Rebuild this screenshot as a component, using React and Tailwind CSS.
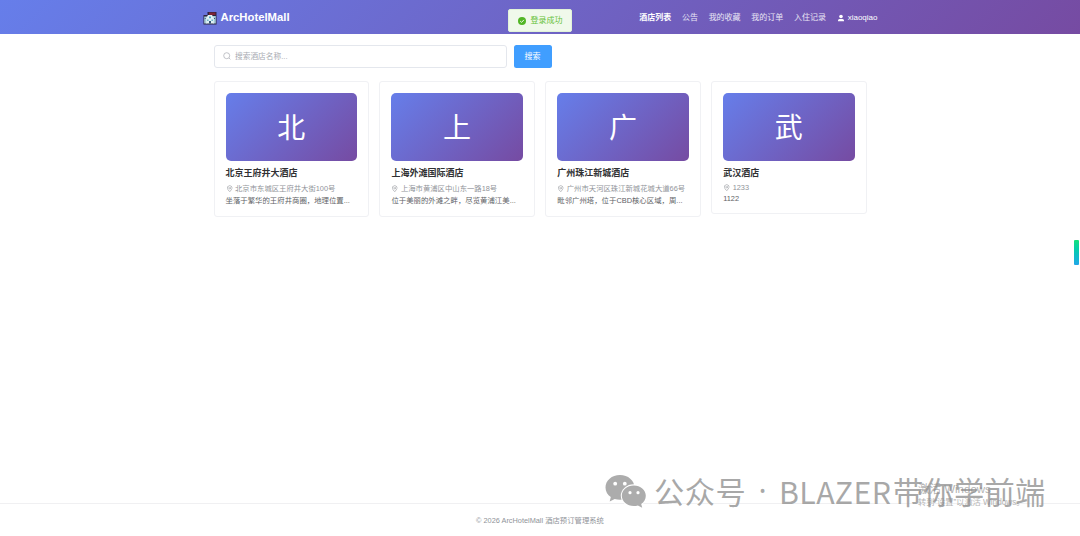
import React from 'react';

const navItems = ['公告', '我的收藏', '我的订单', '入住记录'];

const hotels = [
    { name: '北京王府井大酒店', address: '北京市东城区王府井大街100号', desc: '坐落于繁华的王府井商圈，地理位置...' },
    { name: '上海外滩国际酒店', address: '上海市黄浦区中山东一路18号', desc: '位于美丽的外滩之畔，尽览黄浦江美...' },
    { name: '广州珠江新城酒店', address: '广州市天河区珠江新城花城大道66号', desc: '毗邻广州塔，位于CBD核心区域，周...' },
    { name: '武汉酒店', address: '1233', desc: '1122', short: true },
];

const HotelLogo = () => (
    <svg viewBox="0 0 14 14" className="h-[14px] w-[14px] shrink-0">
        <path d="M.5 4h4V1h9v12.500H.5z" fill="#2b2340" />
        <path d="M6 1.500h6.500V4H6z" fill="#7d2537" />
        <path d="M1.200 5.500h3v7h-3zM10 5h2.800v7.500H10z" fill="#a5cbd6" />
        <path d="M3.200 12.500V7L5 4h4l1.800 3v5.500z" fill="#e0f1f4" />
        <path d="M6 5.500h2v1.800H6zM4.200 8.500h1.300v1.500H4.200zM8.500 8.500h1.300v1.500H8.500z" fill="#51a8c4" />
        <path d="M6 10h2v2.500H6zM1.700 7h1v1h-1zM11 7h1v1h-1z" fill="#35547a" />
    </svg>
);

const PinIcon = () => (
    <svg viewBox="0 0 1024 1024" className="h-[7.500px] w-[7.500px] shrink-0" fill="currentColor">
        <path d="M800 416a288 288 0 1 0-576 0c0 118.144 94.528 272.128 288 456.576C705.472 688.128 800 534.144 800 416M512 960C277.312 746.688 160 565.312 160 416a352 352 0 0 1 704 0c0 149.312-117.312 330.688-352 544" />
        <path d="M512 512a96 96 0 1 0 0-192 96 96 0 0 0 0 192m0 64a160 160 0 1 1 0-320 160 160 0 0 1 0 320" />
    </svg>
);

const Header = () => (
    <header className="h-[33.500px] bg-[linear-gradient(135deg,#667eea_0%,#764ba2_100%)] text-white">
        <div className="mx-auto flex h-full w-[675px] items-center justify-between">
            <div className="flex items-center gap-[3.500px] pt-[2px] pl-[0.500px]">
                <HotelLogo />
                <span className="text-[11.300px] leading-none font-bold">ArcHotelMall</span>
            </div>
            <nav className="flex items-center gap-[10.700px] pt-[2px] text-[8px] leading-none">
                <span className="font-bold">酒店列表</span>
                {navItems.map(item => (
                    <span key={item} className="text-white/85">{item}</span>
                ))}
                <span className="flex items-center gap-[3px]">
                    <svg viewBox="0 0 8 8" className="h-[8px] w-[8px]" fill="currentColor">
                        <circle cx="4" cy="2.500" r="1.800" />
                        <path d="M1 7.200V6.500Q1 5 2.500 5h3Q7 5 7 6.500v.7z" />
                    </svg>
                    <span className="text-[8px]">xiaoqiao</span>
                </span>
            </nav>
        </div>
    </header>
);

const SearchBar = () => (
    <div className="flex gap-[7px]">
        <div className="flex h-[23px] w-[293px] items-center gap-[4.500px] rounded-[3px] border border-[#e4e7ed] px-[8px] text-[#a8abb2]">
            <svg viewBox="0 0 8 8" className="h-[8px] w-[8px]" fill="none" stroke="currentColor" strokeWidth="0.7">
                <circle cx="3.700" cy="3.700" r="3" />
                <path d="M6 6l1.400 1.400" />
            </svg>
            <span className="pt-px text-[7.700px] leading-none">搜索酒店名称...</span>
        </div>
        <button className="h-[23px] w-[38px] rounded-[2.500px] bg-[#409eff] pt-px text-[8px] leading-none text-white">搜索</button>
    </div>
);

const HotelCard = ({ hotel }) => (
    <div className={`rounded-[3px] border border-[#f0f1f4] px-[11px] pt-[11px] ${hotel.short ? 'h-[133px]' : 'h-[135.500px]'}`}>
        <div className="flex h-[67.500px] items-center justify-center rounded-[5px] bg-[linear-gradient(135deg,#667eea_0%,#764ba2_100%)] pt-[4px] text-[28px] leading-none text-white">
            {hotel.name[0]}
        </div>
        <h3 className="mt-[7.500px] text-[9px] leading-[11px] font-bold whitespace-nowrap text-[#303133]">{hotel.name}</h3>
        <div className={`mt-[4px] flex items-center gap-[2px] text-[7.350px] whitespace-nowrap text-[#909399] ${hotel.short ? 'leading-[10px]' : 'leading-[12px]'}`}>
            <PinIcon />
            <span>{hotel.address}</span>
        </div>
        <p className={`text-[7.400px] whitespace-nowrap text-[#606266] ${hotel.short ? 'leading-[11px]' : 'leading-[12px]'}`}>{hotel.desc}</p>
    </div>
);

const Toast = () => (
    <div className="absolute top-[9px] left-[508px] flex h-[23px] w-[64px] items-center gap-[4.500px] rounded-[2px] border border-[#e1f3d8] bg-[#f0f9eb] pl-[9px] text-[8px] leading-none text-[#67c23a]">
        <svg viewBox="0 0 8 8" className="h-[8px] w-[8px]">
            <circle cx="4" cy="4" r="4" fill="#52b626" />
            <path d="M2.200 4.100l1.300 1.300 2.400-2.500" fill="none" stroke="#fff" strokeWidth="0.9" />
        </svg>
        <span>登录成功</span>
    </div>
);

const WindowsNotice = () => (
    <div className="absolute top-[482px] left-[918px] whitespace-nowrap text-[#b4b4b4]">
        <div className="text-[11.500px] leading-[15px]">激活 Windows</div>
        <div className="text-[8.200px] leading-[12px]">转到“设置”以激活 Windows。</div>
    </div>
);

const Watermark = () => (
    <div className="absolute top-[473px] left-[605px] flex items-start font-['Noto_Sans_CJK_SC',sans-serif] text-[30.300px] leading-[36px] whitespace-nowrap text-[#8c8c8c]/75">
        <svg viewBox="0 0 42 36" className="h-[36px] w-[42px]">
            <path d="M15 2C6.700 2 .5 7.500.5 14.500c0 4 2 7.300 5.300 9.500L4.700 28.500l5-2.500c1.700.5 3.300.8 5.300.8C23 26.800 29.500 21.500 29.500 14.500S23 2 15 2z" fill="#acacac" />
            <ellipse cx="28.800" cy="22.800" rx="13" ry="11.500" fill="#fff" />
            <path d="M28.800 12.500c-6.700 0-12 4.600-12 10.300s5.300 10.300 12 10.300c1.500 0 2.800-.2 4.100-.6l4.300 2.300-1-3.700c2.800-1.900 4.600-4.900 4.600-8.300 0-5.700-5.300-10.300-12-10.300z" fill="#acacac" />
            <g fill="#fff">
                <circle cx="10.200" cy="10.700" r="1.900" />
                <circle cx="19.800" cy="10.700" r="1.900" />
                <circle cx="25" cy="19.700" r="1.600" />
                <circle cx="33" cy="19.700" r="1.600" />
            </g>
        </svg>
        <span className="ml-[7px] w-[94px] tracking-[0.500px]">公众号</span>
        <span className="flex w-[29px] justify-center font-['Noto_Sans',sans-serif]">·</span>
        <span className="w-[116px] pl-[2px] tracking-[0.400px]">BLAZER</span>
        <span className="tracking-[0.200px]">带你学前端</span>
    </div>
);

const App = () => {
    return (
        <div className="relative flex h-[536px] w-[1080px] flex-col overflow-hidden bg-white font-['Liberation_Sans','Noto_Sans_CJK_SC',sans-serif]">
            <Header />
            <main className="mx-auto w-[653px] flex-1 pt-[11px]">
                <SearchBar />
                <div className="mt-[13.500px] grid grid-cols-4 items-start gap-[10.500px]">
                    {hotels.map(hotel => (
                        <HotelCard key={hotel.name} hotel={hotel} />
                    ))}
                </div>
            </main>
            <footer className="h-[33px] border-t border-[#f0f0f2] pt-[12px] text-center text-[7.350px] leading-[10px] text-[#909399]">
                © 2026 ArcHotelMall 酒店预订管理系统
            </footer>
            <Toast />
            <WindowsNotice />
            <Watermark />
            <div className="absolute top-[240px] right-[1px] h-[25px] w-[5px] rounded-[1px] bg-linear-to-b from-[#16e07a] to-[#22a6e8]" />
        </div>
    );
};

export default App;
